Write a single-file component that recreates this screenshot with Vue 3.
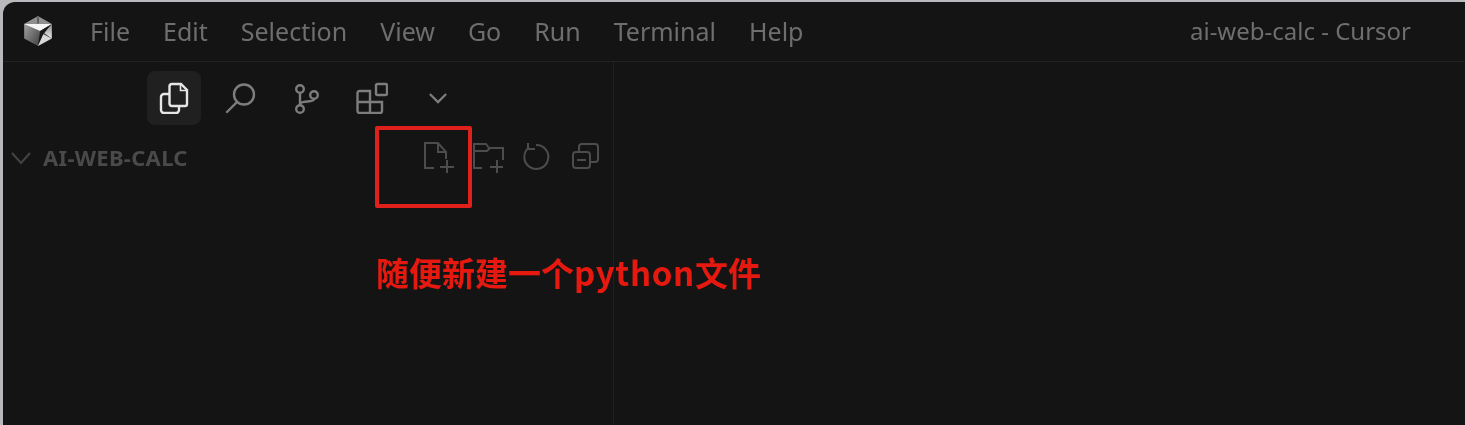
<template>
  <div class="frame">
    <div class="window">
      <header class="titlebar">
        <svg class="logo" viewBox="0 0 32 32">
          <defs>
            <linearGradient id="cubeLeft" x1="0" y1="0" x2="1" y2="0.6">
              <stop offset="0" stop-color="#b0b0b0" />
              <stop offset="1" stop-color="#2e2e2e" />
            </linearGradient>
            <linearGradient id="cubeRight" x1="0" y1="0" x2="0" y2="1">
              <stop offset="0" stop-color="#8a8a8a" />
              <stop offset="1" stop-color="#ececec" />
            </linearGradient>
          </defs>
          <polygon points="16,2 29,9.500 29,23 16,30 3,23 3,9.500" fill="url(#cubeLeft)" />
          <polygon points="16,2 29,9.500 3,9.500" fill="#8f8f8f" />
          <polygon points="3,9.500 29,9.500 18,16" fill="#f4f4f4" />
          <polygon points="15.500,3 16.500,3 16.500,9 15.500,9" fill="#333333" />
          <polygon points="29,9.500 18,16 16,30 21,18.500" fill="#161616" />
          <polygon points="29,9.500 29,23 22,18 25,14" fill="url(#cubeRight)" />
          <polygon points="21,19 29,23 16,30" fill="#d8d8d8" />
        </svg>
        <nav class="menu">
          <span v-for="item in menuItems" :key="item">{{ item }}</span>
        </nav>
        <div class="title">ai-web-calc - Cursor</div>
      </header>

      <div class="workbench">
        <aside class="sidebar">
          <div class="tabs">
            <div class="tab active">
              <svg viewBox="0 0 32 32" class="tab-icon">
                <path d="M14 2h9l6 6v14a2 2 0 0 1-2 2H14a2.500 2.500 0 0 1-2.500-2.500v-17A2.500 2.500 0 0 1 14 2z" />
                <path d="M22.500 2v6.500H29" stroke-width="1.6" />
                <path d="M11.500 12H6a3 3 0 0 0-3 3v13a3 3 0 0 0 3 3h12a3 3 0 0 0 3-3v-4" />
              </svg>
            </div>
            <div class="tab">
              <svg viewBox="0 0 32 32" class="tab-icon">
                <circle cx="20" cy="12.500" r="10" />
                <path d="M13 20 3 30" stroke-linecap="round" />
              </svg>
            </div>
            <div class="tab">
              <svg viewBox="0 0 32 32" class="tab-icon">
                <circle cx="10" cy="7" r="3.800" />
                <circle cx="10" cy="27" r="3.800" />
                <circle cx="24" cy="13" r="3.800" />
                <path d="M10 11v12M10 22c1-4 14-1 14-5" />
              </svg>
            </div>
            <div class="tab">
              <svg viewBox="0 0 32 32" class="tab-icon">
                <rect x="20" y="2" width="11" height="11" rx="1.500" />
                <path d="M3.500 9H14v22H3.500a2 2 0 0 1-2-2V11a2 2 0 0 1 2-2z" />
                <path d="M1.500 20H26v9a2 2 0 0 1-2 2H14" />
              </svg>
            </div>
            <div class="tab">
              <svg viewBox="0 0 32 32" class="chevron-big">
                <path d="M6 11 16 21 26 11" />
              </svg>
            </div>
          </div>

          <div class="explorer-head">
            <svg viewBox="0 0 20 20" class="chevron-small">
              <path d="M1 5 10 15 19 5" />
            </svg>
            <span class="project-name">AI-WEB-CALC</span>
            <div class="actions">
              <div class="action">
                <svg viewBox="0 0 32 32">
                  <path d="M11 27H2V2h13l8 9v7" />
                  <path d="M15 2v9h8" />
                  <path d="M17 26h14M24 19v14" />
                </svg>
              </div>
              <div class="action">
                <svg viewBox="0 0 32 32">
                  <path d="M10 27H2V3h12l3 4h14v12" />
                  <path d="M2 10h13l3-3" />
                  <path d="M18 26h13M25 19v14" />
                </svg>
              </div>
              <div class="action">
                <svg viewBox="0 0 32 32">
                  <path d="M8 6.500A12 12 0 1 0 15 4" />
                  <path d="M7 2v6h7" />
                </svg>
              </div>
              <div class="action">
                <svg viewBox="0 0 32 32">
                  <rect x="3" y="11" width="17" height="16" rx="3" />
                  <path d="M9 11V6a3 3 0 0 1 3-3h13a3 3 0 0 1 3 3v12a3 3 0 0 1-3 3h-5" />
                  <path d="M7 19h9" />
                </svg>
              </div>
            </div>
          </div>
        </aside>
        <main class="editor"></main>
      </div>

      <div class="callout-box"></div>
      <div class="callout-text">随便新建一个<span class="latin">python</span>文件</div>
    </div>
  </div>
</template>

<script setup>
const menuItems = ['File', 'Edit', 'Selection', 'View', 'Go', 'Run', 'Terminal', 'Help']
</script>

<style>
html,
body {
  margin: 0;
  background: #141414;
}
</style>

<style scoped>
.frame {
  width: 1465px;
  height: 425px;
  box-sizing: border-box;
  padding: 2px 0 0 3px;
  background: #b9b9bd;
  overflow: hidden;
}

.window {
  position: relative;
  display: flex;
  flex-direction: column;
  height: 423px;
  background: #141414;
  border-top-left-radius: 12px;
  filter: blur(0.5px);
}

.titlebar {
  display: flex;
  align-items: center;
  height: 59px;
  flex-shrink: 0;
  border-bottom: 1px solid #222222;
  font-family: "Noto Sans", sans-serif;
  font-size: 24px;
  color: #6e6e6e;
}

.logo {
  width: 34px;
  height: 34px;
  margin-left: 18px;
  margin-bottom: 1px;
}

.menu {
  display: flex;
  gap: 33px;
  margin-left: 35px;
  margin-bottom: 2px;
  font-size: 25px;
}

.title {
  margin-left: auto;
  margin-right: 54px;
  margin-bottom: 2px;
}

.workbench {
  display: flex;
  flex: 1;
}

.sidebar {
  width: 611px;
  box-sizing: border-box;
  border-right: 1px solid #1f1f1f;
}

.tabs {
  display: flex;
  gap: 12px;
  padding: 9px 0 0 144px;
}

.tab {
  display: flex;
  align-items: center;
  justify-content: center;
  width: 54px;
  height: 54px;
  border-radius: 8px;
}

.tab.active {
  background: #202020;
}

.tab-icon {
  width: 32px;
  height: 32px;
  fill: none;
  stroke: #7d7d7d;
  stroke-width: 2.4;
}

.active .tab-icon {
  stroke: #e6e6e6;
}

.chevron-big {
  width: 26px;
  height: 26px;
  fill: none;
  stroke: #7d7d7d;
  stroke-width: 2.8;
}

.explorer-head {
  display: flex;
  align-items: center;
  height: 50px;
  margin-top: 8px;
  padding-left: 8px;
  padding-right: 3px;
}

.chevron-small {
  width: 20px;
  height: 20px;
  fill: none;
  stroke: #444444;
  stroke-width: 2;
}

.project-name {
  margin-left: 12px;
  margin-bottom: 2px;
  font-family: "Noto Sans", sans-serif;
  font-size: 22px;
  font-weight: 700;
  color: #4a4a4a;
  letter-spacing: 0.3px;
}

.actions {
  display: flex;
  margin-left: auto;
}

.action {
  display: flex;
  align-items: center;
  justify-content: center;
  width: 49px;
  height: 50px;
}

.action svg {
  width: 32px;
  height: 32px;
  margin-bottom: 2px;
  fill: none;
  stroke: #4c4c4c;
  stroke-width: 2;
}

.editor {
  flex: 1;
}

.callout-box {
  position: absolute;
  left: 372px;
  top: 124px;
  width: 97px;
  height: 82px;
  box-sizing: border-box;
  border: 4px solid #e0201a;
  border-radius: 2px;
}

.callout-text {
  position: absolute;
  left: 373px;
  top: 248px;
  font-family: "Noto Sans CJK SC", sans-serif;
  font-size: 33px;
  font-weight: 700;
  line-height: 44px;
  color: #e5190f;
  white-space: nowrap;
}

.latin {
  letter-spacing: 0.7px;
}
</style>
